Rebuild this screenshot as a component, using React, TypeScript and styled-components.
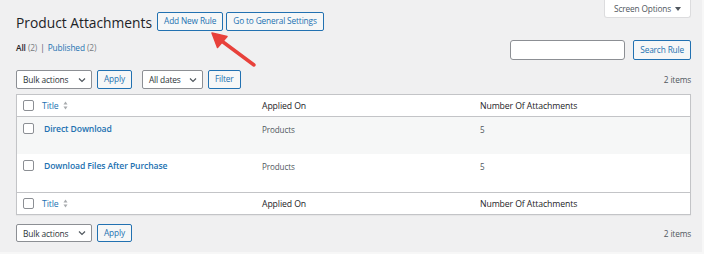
import React from 'react';
import styled, {createGlobalStyle} from 'styled-components';

const colors = {
  bg: '#f0f0f1',
  text: '#1d2327',
  muted: '#50575e',
  link: '#2271b1',
  border: '#c3c4c7',
  stripe: '#f6f7f7',
};

const GlobalStyle = createGlobalStyle`
  html, body {
    margin: 0;
    padding: 0;
    background: ${colors.bg};
  }
  body {
    font-family: "Open Sans", "Noto Sans", sans-serif;
    color: ${colors.text};
  }
`;

const Page = styled.div`
  position: relative;
  box-sizing: border-box;
  width: 704px;
  height: 254px;
  padding: 0 11px 0 16px;
  display: flex;
  flex-direction: column;
  border-right: 2px solid #f7f7f7;
  border-bottom: 2px solid #f7f7f7;
`;

const TopRow = styled.div`
  display: flex;
  justify-content: space-between;
  align-items: flex-start;
`;

const TitleGroup = styled.div`
  display: flex;
  align-items: flex-start;
  gap: 3px;
  padding-top: 12px;
`;

const Heading = styled.h1`
  margin: 1px 2px 0 0;
  font-size: 13.8px;
  font-weight: 400;
  line-height: 19px;
  color: ${colors.text};
`;

const Button = styled.button<{$h?: number; $px?: number}>`
  box-sizing: border-box;
  height: ${(p) => p.$h ?? 19}px;
  padding: 0 ${(p) => p.$px ?? 6}px;
  border: 1px solid ${colors.link};
  border-radius: 2px;
  background: ${colors.stripe};
  color: ${colors.link};
  font-family: inherit;
  font-size: 8.3px;
  letter-spacing: -0.15px;
  line-height: 1;
  white-space: nowrap;
`;

const ScreenTab = styled.div`
  box-sizing: border-box;
  height: 18px;
  width: 87px;
  display: flex;
  align-items: center;
  justify-content: center;
  gap: 4px;
  background: #fff;
  border: 1px solid #dcdcde;
  border-top: none;
  border-radius: 0 0 3px 3px;
  font-size: 8.3px;
  letter-spacing: -0.15px;
  color: ${colors.muted};
`;

const Caret = styled.span`
  width: 0;
  height: 0;
  border-left: 3px solid transparent;
  border-right: 3px solid transparent;
  border-top: 4px solid ${colors.muted};
`;

const FilterRow = styled.div`
  display: flex;
  justify-content: space-between;
  align-items: flex-start;
  margin-top: 8px;
`;

const ViewLinks = styled.div`
  margin-top: 2px;
  font-size: 8.3px;
  letter-spacing: -0.1px;
  color: ${colors.muted};
  display: flex;
  gap: 3px;
`;

const Current = styled.span`
  font-weight: 600;
  color: ${colors.text};
`;

const Link = styled.span`
  color: ${colors.link};
`;

const Count = styled.span`
  color: #787c82;
`;

const SearchBox = styled.div`
  display: flex;
  gap: 8px;
`;

const SearchInput = styled.div`
  box-sizing: border-box;
  width: 115px;
  height: 20px;
  background: #fff;
  border: 1px solid #8c8f94;
  border-radius: 3px;
`;

const TableNav = styled.div<{$top?: boolean}>`
  display: flex;
  align-items: center;
  justify-content: space-between;
  margin-top: ${(p) => (p.$top ? 10 : 9)}px;
  margin-bottom: ${(p) => (p.$top ? 5 : 0)}px;
`;

const Actions = styled.div`
  display: flex;
  align-items: center;
  gap: 5px;
`;

const Select = styled.div<{$w: number; $h?: number}>`
  box-sizing: border-box;
  width: ${(p) => p.$w}px;
  height: ${(p) => p.$h ?? 19}px;
  padding: 0 5px 0 6px;
  display: flex;
  align-items: center;
  justify-content: space-between;
  background: #fff;
  border: 1px solid #8c8f94;
  border-radius: 2px;
  font-size: 8.4px;
  letter-spacing: -0.15px;
  color: #2c3338;
`;

const Spacer = styled.div`
  width: 0;
`;

const Items = styled.span`
  font-size: 8.3px;
  letter-spacing: -0.15px;
  color: ${colors.muted};
`;

const Table = styled.div`
  background: #fff;
  border: 1px solid ${colors.border};
  box-shadow: 0 1px 1px rgba(0, 0, 0, 0.04);
`;

const Row = styled.div<{$kind: 'head' | 'foot' | 'odd' | 'even'}>`
  display: grid;
  grid-template-columns: 25px 220px 218px 1fr;
  align-items: ${(p) => (p.$kind === 'head' || p.$kind === 'foot' ? 'center' : 'start')};
  height: ${(p) => (p.$kind === 'head' || p.$kind === 'foot' ? 22 : p.$kind === 'odd' ? 37 : 38)}px;
  padding-top: ${(p) => (p.$kind === 'head' || p.$kind === 'foot' ? 0 : 6)}px;
  box-sizing: border-box;
  background: ${(p) => (p.$kind === 'odd' ? colors.stripe : '#fff')};
  border-bottom: ${(p) => (p.$kind === 'head' ? `1px solid ${colors.border}` : 'none')};
  border-top: ${(p) => (p.$kind === 'foot' ? `1px solid ${colors.border}` : 'none')};
`;

const CheckCell = styled.div`
  padding-left: 6px;
  display: flex;
  align-items: center;
`;

const Checkbox = styled.span`
  box-sizing: border-box;
  width: 11px;
  height: 11px;
  background: #fff;
  border: 1px solid #8c8f94;
  border-radius: 2px;
`;

const HeadCell = styled.div`
  font-size: 8.7px;
  letter-spacing: -0.1px;
  color: ${colors.text};
  display: flex;
  align-items: center;
  gap: 4px;
`;

const SortLink = styled.span`
  color: ${colors.link};
`;

const TitleCell = styled.div`
  padding-left: 2px;
  font-size: 8.6px;
  letter-spacing: -0.1px;
  font-weight: 600;
  color: ${colors.link};
`;

const DataCell = styled.div`
  padding-top: 1px;
  font-size: 8.1px;
  letter-spacing: -0.1px;
  color: ${colors.muted};
`;

const Arrow = styled.svg`
  position: absolute;
  left: 205px;
  top: 28px;
  pointer-events: none;
`;

const Chevron = () => (
  <svg width="8" height="6" viewBox="0 0 8 6">
    <path d="M1 1.5 L4 4.5 L7 1.5" fill="none" stroke="#50575e" strokeWidth="1.2" />
  </svg>
);

const SortIcon = () => (
  <svg width="5" height="9" viewBox="0 0 5 9">
    <path d="M2.5 0.5 L4.5 3.5 H0.5 Z" fill="#a7aaad" />
    <path d="M2.5 8.5 L4.5 5.5 H0.5 Z" fill="#a7aaad" />
  </svg>
);

const rules = ['Direct Download', 'Download Files After Purchase'];

const HeaderCells = () => (
  <>
    <CheckCell><Checkbox /></CheckCell>
    <HeadCell><SortLink>Title</SortLink><SortIcon /></HeadCell>
    <HeadCell>Applied On</HeadCell>
    <HeadCell>Number Of Attachments</HeadCell>
  </>
);

const App = () => {
  return (
    <Page>
      <GlobalStyle />
      <TopRow>
        <TitleGroup>
          <Heading>Product Attachments</Heading>
          <Button>Add New Rule</Button>
          <Button>Go to General Settings</Button>
        </TitleGroup>
        <ScreenTab>Screen Options <Caret /></ScreenTab>
      </TopRow>

      <FilterRow>
        <ViewLinks>
          <span><Current>All</Current> <Count>(2)</Count></span>
          <span>|</span>
          <span><Link>Published</Link> <Count>(2)</Count></span>
        </ViewLinks>
        <SearchBox>
          <SearchInput />
          <Button $h={20}>Search Rule</Button>
        </SearchBox>
      </FilterRow>

      <TableNav $top>
        <Actions>
          <Select $w={76}>Bulk actions <Chevron /></Select>
          <Button>Apply</Button>
          <Spacer />
          <Select $w={61}>All dates <Chevron /></Select>
          <Button>Filter</Button>
        </Actions>
        <Items>2 items</Items>
      </TableNav>

      <Table>
        <Row $kind="head"><HeaderCells /></Row>
        {rules.map((name, i) => (
          <Row key={name} $kind={i % 2 === 0 ? 'odd' : 'even'}>
            <CheckCell><Checkbox /></CheckCell>
            <TitleCell>{name}</TitleCell>
            <DataCell>Products</DataCell>
            <DataCell>5</DataCell>
          </Row>
        ))}
        <Row $kind="foot"><HeaderCells /></Row>
      </Table>

      <TableNav>
        <Actions>
          <Select $w={76} $h={18}>Bulk actions <Chevron /></Select>
          <Button $h={18}>Apply</Button>
        </Actions>
        <Items>2 items</Items>
      </TableNav>

      <Arrow width="56" height="44" viewBox="0 0 56 44">
        <line x1="49" y1="37" x2="14" y2="11" stroke="#e8413b" strokeWidth="3.5" strokeLinecap="round" />
        <path d="M7 5 L22 8.5 L12.5 19.5 Z" fill="#e8413b" stroke="#e8413b" strokeWidth="1.5" strokeLinejoin="round" />
      </Arrow>
    </Page>
  );
};

export default App;
